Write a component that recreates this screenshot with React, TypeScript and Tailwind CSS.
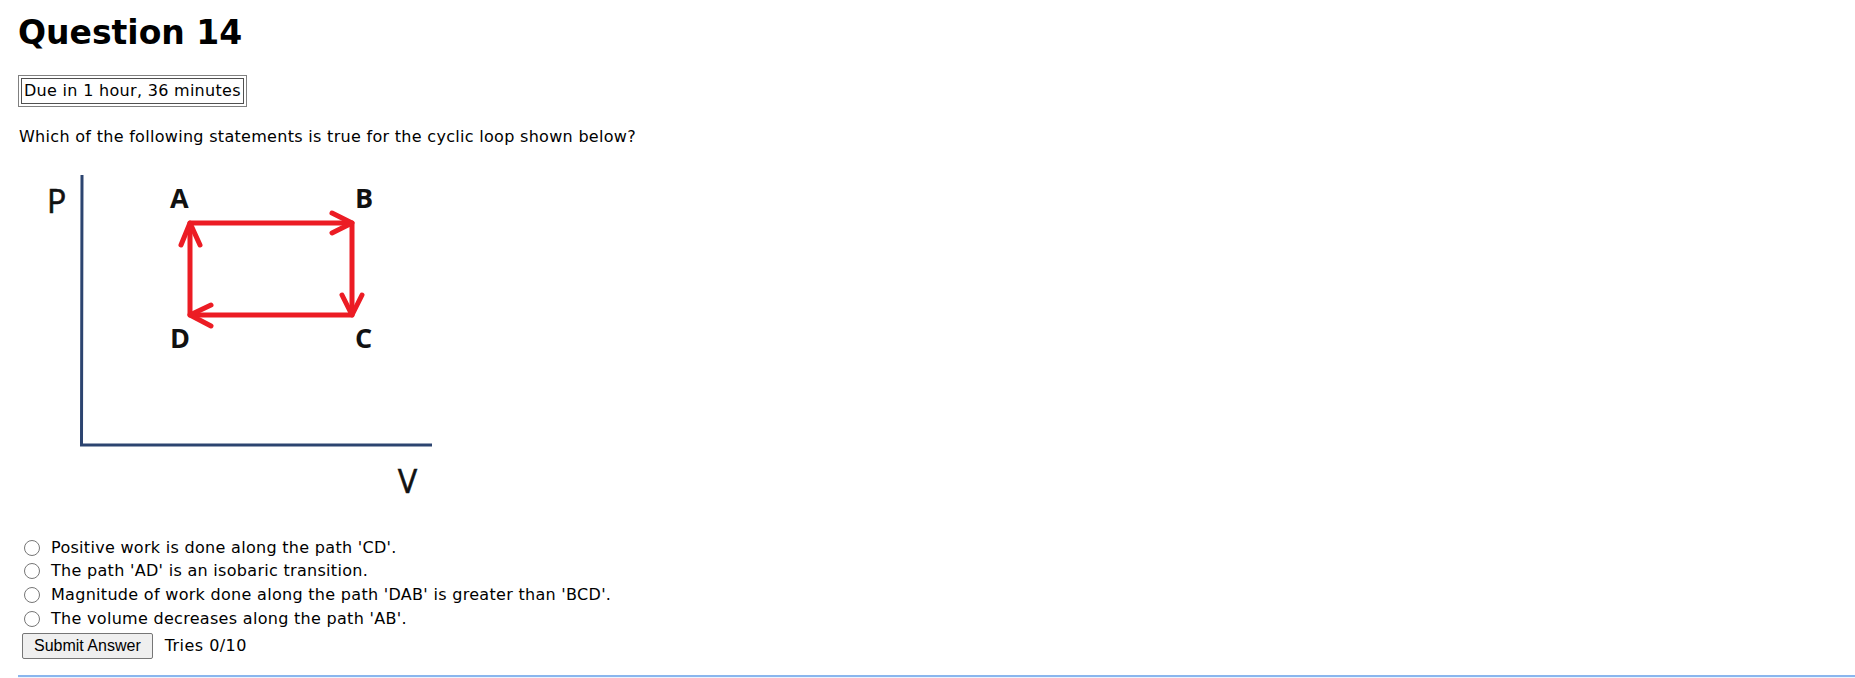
const options = [
  "Positive work is done along the path 'CD'.",
  "The path 'AD' is an isobaric transition.",
  "Magnitude of work done along the path 'DAB' is greater than 'BCD'.",
  "The volume decreases along the path 'AB'.",
];

function PVDiagram() {
  const red = '#ec1c24';
  const navy = '#2c4470';
  return (
    <svg width="440" height="345" viewBox="0 0 440 345" className="block">
      {/* axes */}
      <path d="M64 15 L63.5 285 L414 285" fill="none" stroke={navy} strokeWidth="3" />
      <text x="29" y="53" fontFamily="'Open Sans', sans-serif" fontSize="32" fill="#111" stroke="#111" strokeWidth="0.6">P</text>
      <text x="380" y="333" fontFamily="'Open Sans', sans-serif" fontSize="32" fill="#111" stroke="#111" strokeWidth="0.6">V</text>

      {/* corner labels */}
      <g fontFamily="'Open Sans', sans-serif" fontWeight="700" fontSize="27" fill="#111">
        <text x="152" y="48">A</text>
        <text x="337" y="48">B</text>
        <text x="152" y="188">D</text>
        <text x="337" y="188">C</text>
      </g>

      {/* cycle */}
      <g fill="none" stroke={red} strokeWidth="5" strokeLinecap="round" strokeLinejoin="round">
        <path d="M172 63 L334 63 L334 155 L172 155 Z" />
        <path d="M314 53 L334 63 L314 73" />
        <path d="M324 135 L334 155 L344 135" />
        <path d="M193 145 L172 155 L193 166" />
        <path d="M163 85 L172 63 L182 85" />
      </g>
    </svg>
  );
}

export default function App() {
  return (
    <div className="min-h-[678px] bg-white pl-[18px] font-['DejaVu_Sans',Verdana,sans-serif] text-black">
      <h2 className="pt-[14px] text-[33px] font-bold leading-[38px]">Question 14</h2>

      <div className="mt-[23px] inline-block border border-[#808080] p-[2px]">
        <div className="border border-[#505050] px-[2px] py-0 text-[16px] leading-[24px] tracking-[0.3px]">
          Due in 1 hour, 36 minutes
        </div>
      </div>

      <p className="mt-[18px] ml-px text-[16px] leading-[24px] tracking-[0.3px]">
        Which of the following statements is true for the cyclic loop shown below?
      </p>

      <div className="mt-[11px]">
        <PVDiagram />
      </div>

      <div className="mt-[31px]">
        {options.map((opt, i) => (
          <label key={i} className="flex h-[23.6px] items-center text-[16px] tracking-[0.3px]">
            <span className="ml-[6px] h-4 w-4 rounded-full border border-[#767676] bg-white" />
            <span className="ml-[11px]">{opt}</span>
          </label>
        ))}
      </div>

      <div className="mt-[2.6px] flex items-center">
        <button className="ml-[4px] h-[26px] rounded-[2px] border border-[#767676] bg-[#efefef] px-[11px] font-['Liberation_Sans',Arial,sans-serif] text-[16px] text-black">
          Submit Answer
        </button>
        <span className="ml-[12px] text-[16px] tracking-[0.45px]">Tries 0/10</span>
      </div>

      <div className="mt-[16px] h-[10px] border-t-2 border-[#8ab6ee] bg-[#eef4fd]" />
    </div>
  );
}
